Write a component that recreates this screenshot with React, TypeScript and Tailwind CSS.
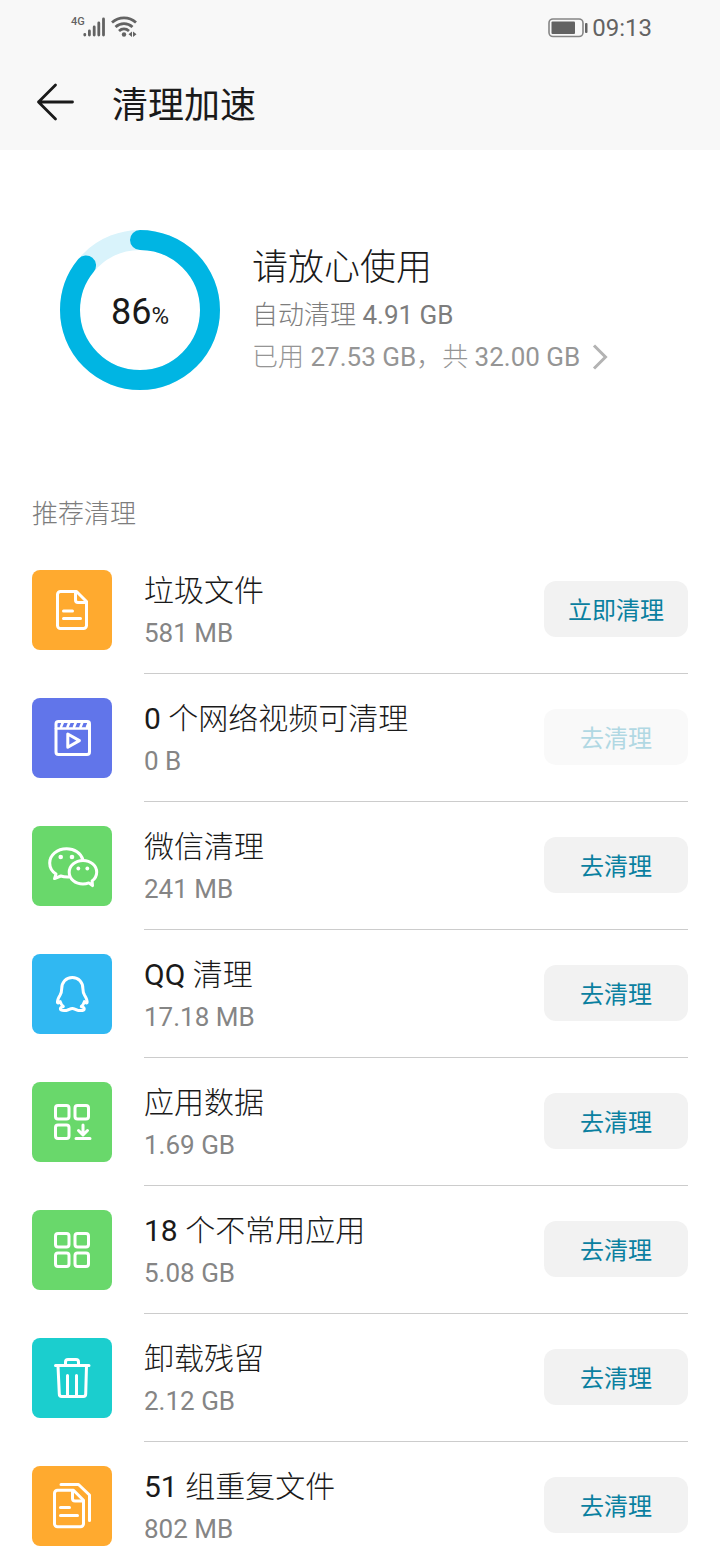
import React from 'react';
import { clsx } from 'clsx';

type CleanItem = {
  title: string;
  size: string;
  action: string;
  tile: string;
  icon: React.ReactNode;
  disabled?: boolean;
};

// Light Chinese glyphs next to regular-weight latin and digits
const Mixed = ({ text }: { text: string }) => (
  <span>
    {text.split(/([\x20-\x7e]+)/).filter(Boolean).map((part, index) => (
      <span key={index} className={/^[\x20-\x7e]/.test(part) ? 'font-normal' : 'font-light'}>
        {part}
      </span>
    ))}
  </span>
);

const Squares = ({ children }: { children?: React.ReactNode }) => (
  <>
    <rect x="23.5" y="23.5" width="13.5" height="13.5" rx="2.5" />
    <rect x="43" y="23.5" width="13.5" height="13.5" rx="2.5" />
    <rect x="23.5" y="43" width="13.5" height="13.5" rx="2.5" />
    {children}
  </>
);

const items: CleanItem[] = [
  {
    title: '垃圾文件',
    size: '581 MB',
    action: '立即清理',
    tile: 'bg-[#ffaa2f]',
    icon: (
      <>
        <path d="M44.5 21.5H28.5a3 3 0 0 0-3 3v31a3 3 0 0 0 3 3h23a3 3 0 0 0 3-3V31.5z" />
        <path d="M43.5 22v8a2.5 2.5 0 0 0 2.5 2.5h8" />
        <path d="M31.5 41h9M31.5 48.5h17" />
      </>
    ),
  },
  {
    title: '0 个网络视频可清理',
    size: '0 B',
    action: '去清理',
    tile: 'bg-[#6175ea]',
    disabled: true,
    icon: (
      <>
        <rect x="24" y="23.5" width="33.5" height="33" rx="2.5" />
        <path d="M24 30.5h33" strokeWidth="2.4" />
        <path d="M29 29l2-5M35.5 29l2-5M42 29l2-5M48.5 29l2-5M55 29l2-5" strokeWidth="2.6" />
        <path d="M35.8 36v13.2l11.6-6.6z" />
      </>
    ),
  },
  {
    title: '微信清理',
    size: '241 MB',
    action: '去清理',
    tile: 'bg-[#69d86b]',
    icon: (
      <>
        <path d="M50.8 33.5C49 27 42.5 22.7 34.6 22.7c-9.4 0-16.9 6.3-16.9 14.2 0 4.6 2.5 8.6 6.3 11.1L22.5 52.6l6.3-2.6c2.3.8 4.8 1.1 8 1" />
        <path d="M51 34.4c-7.7 0-13.8 5.2-13.8 11.8S43.3 58 51 58c2 0 4-.4 5.8-1.1l3.7 2.7-.4-4.7c2.9-2.2 4.6-5.3 4.6-8.7 0-6.6-6-11.8-13.7-11.8z" />
        <g fill="currentColor" stroke="none">
          <circle cx="28.7" cy="31" r="2.3" />
          <circle cx="40" cy="31" r="2.3" />
          <circle cx="46.3" cy="42.5" r="1.9" />
          <circle cx="55.3" cy="42.5" r="1.9" />
        </g>
      </>
    ),
  },
  {
    title: 'QQ 清理',
    size: '17.18 MB',
    action: '去清理',
    tile: 'bg-[#30b8f2]',
    icon: (
      <path d="M40.3 23.5c-6.5 0-10.6 5-10.6 11.2 0 2.5-.4 4.3-1.7 6.6-1.5 2.5-2.9 5-2.5 7.2.2 1 1.3.4 2.7-.9.6 2 1.6 3.7 3.1 4.9-2 .7-3.1 1.500-2.9 2.600.3 1.600 3.200 1.600 5.900 1.300 2.500-.3 3.700-1.900 6-1.900s3.500 1.600 6 1.900c2.700.3 5.600.3 5.900-1.300.2-1.100-.9-1.900-2.900-2.600 1.500-1.200 2.500-2.900 3.100-4.900 1.400 1.300 2.500 1.900 2.700.9.4-2.200-1-4.700-2.500-7.200-1.300-2.300-1.700-4.100-1.700-6.600 0-6.200-4.100-11.200-10.600-11.200z" />
    ),
  },
  {
    title: '应用数据',
    size: '1.69 GB',
    action: '去清理',
    tile: 'bg-[#69d86b]',
    icon: (
      <Squares>
        <path d="M51 43v9.5M46.5 48.5l4.5 4.5 4.5-4.5M44 56.5h14" />
      </Squares>
    ),
  },
  {
    title: '18 个不常用应用',
    size: '5.08 GB',
    action: '去清理',
    tile: 'bg-[#69d86b]',
    icon: (
      <Squares>
        <rect x="43" y="43" width="13.5" height="13.5" rx="2.5" />
      </Squares>
    ),
  },
  {
    title: '卸载残留',
    size: '2.12 GB',
    action: '去清理',
    tile: 'bg-[#1bcece]',
    icon: (
      <>
        <path d="M23.5 27.5h33.5M33.5 27v-3a2.5 2.5 0 0 1 2.5-2.5h8a2.5 2.5 0 0 1 2.5 2.5v3" />
        <path d="M26 28l1.3 28a2.5 2.5 0 0 0 2.5 2.5h21.4a2.5 2.5 0 0 0 2.5-2.5L54.5 28" />
        <path d="M35.5 37.5v20.5M44.5 37.5v20.5" />
      </>
    ),
  },
  {
    title: '51 组重复文件',
    size: '802 MB',
    action: '去清理',
    tile: 'bg-[#ffaa2f]',
    icon: (
      <>
        <path d="M41.5 24.2H25.5a3 3 0 0 0-3 3v30.5a3 3 0 0 0 3 3h23a3 3 0 0 0 3-3V34.2z" />
        <path d="M40.5 24.5v8a2.5 2.5 0 0 0 2.5 2.5h8" />
        <path d="M28.5 41.5h9M28.5 49.5h17" />
        <path d="M29 18.5h17.5L57.5 29v25.5" />
      </>
    ),
  },
];

const StatusBar = () => (
  <div className="flex h-14 items-center justify-between pl-[71px] pr-[68px] text-[#636363]">
    <div className="flex items-center pb-1">
      <span className="w-3 self-start pt-0.5 text-[11px] leading-3 font-medium">4G</span>
      <svg className="h-6 w-6" viewBox="0 0 24 24" fill="none" stroke="currentColor" strokeWidth="2.8" strokeLinecap="round">
        <path d="M1.800 20.500v.5M6.400 17v4M11.200 13v8M15.800 9v12M20.500 5v16" />
      </svg>
      <svg className="ml-1 h-6 w-7" viewBox="0 0 28 24" fill="none" stroke="currentColor" strokeWidth="2.8">
        <path d="M1 8.500c7-6.300 17-6.300 24 0M4.500 13c5-4.500 12-4.500 17 0M8 17c3-2.700 7-2.700 10 0" />
        <g fill="currentColor" stroke="none">
          <circle cx="13" cy="20.5" r="2.2" />
          <path d="M21 17.500v5.500l-3.500-2.750zM22 17.500v5.500l3.500-2.750z" />
        </g>
      </svg>
    </div>
    <div className="flex items-center gap-1">
      <svg className="h-5 w-10" viewBox="0 0 40 20" fill="none">
        <rect x="1" y="1" width="34" height="17.5" rx="4" stroke="#858585" strokeWidth="1.6" />
        <rect x="3.5" y="3.5" width="23.5" height="12.5" rx="1" fill="currentColor" />
        <rect x="37" y="5" width="2.5" height="10" rx="1" fill="currentColor" />
      </svg>
      <time className="text-2xl leading-6">09:13</time>
    </div>
  </div>
);

const Header = () => (
  <header className="shrink-0 bg-[#f8f8f8]">
    <StatusBar />
    <div className="flex h-[94px] items-center gap-9 px-9">
      <button type="button" aria-label="返回" className="text-[#1a1a1a]">
        <svg className="h-10 w-10" viewBox="0 0 40 40" fill="none" stroke="currentColor" strokeWidth="2.8" strokeLinecap="round" strokeLinejoin="round">
          <path d="M19.5 2L2.5 19l17 17M2.5 19h34" />
        </svg>
      </button>
      <h1 className="pt-1.5 text-4xl leading-10 text-[#1a1a1a]">清理加速</h1>
    </div>
  </header>
);

const UsageRing = ({ percent }: { percent: number }) => (
  <div className="grid size-40 shrink-0 place-items-center">
    <svg className="col-start-1 row-start-1 size-40 -rotate-90" viewBox="0 0 160 160" fill="none" strokeWidth="20">
      <circle cx="80" cy="80" r="70" stroke="#d9f3fb" />
      <circle
        cx="80"
        cy="80"
        r="70"
        stroke="#00b5e3"
        strokeLinecap="round"
        pathLength="100"
        strokeDasharray={`${percent} 100`}
      />
    </svg>
    <p className="col-start-1 row-start-1 pt-1 text-4xl text-[#1a1a1a]">
      {percent}
      <span className="text-2xl">%</span>
    </p>
  </div>
);

const Summary = () => (
  <section className="flex items-center gap-8 px-15 pt-20">
    <UsageRing percent={86} />
    <div className="pt-0.5">
      <h2 className="mb-0.5 text-4xl leading-12 text-[#1a1a1a]">
        <Mixed text="请放心使用" />
      </h2>
      <p className="text-[26px] leading-[42px] text-[#7d7d7d]">
        <Mixed text="自动清理 4.91 GB" />
      </p>
      <a href="#storage" className="flex items-center gap-3 text-[26px] leading-[42px] text-[#959595]">
        <Mixed text="已用 27.53 GB，共 32.00 GB" />
        <svg className="h-7 w-4" viewBox="0 0 16 28" fill="none" stroke="#b3b3b3" strokeWidth="3">
          <path d="M2 2.5L13.5 14 2 25.5" />
        </svg>
      </a>
    </div>
  </section>
);

const CleanRow = ({ item, last }: { item: CleanItem; last: boolean }) => (
  <li className="flex h-32 gap-8">
    <div className={clsx('mt-6 size-20 shrink-0 rounded-lg text-white', item.tile)}>
      <svg viewBox="0 0 80 80" fill="none" stroke="currentColor" strokeWidth="3" strokeLinecap="round" strokeLinejoin="round">
        {item.icon}
      </svg>
    </div>
    <div className={clsx('flex flex-1 justify-between', !last && 'border-b border-[#cccccc]')}>
      <div className="pt-[23px]">
        <h3 className="text-3xl leading-11 text-[#1a1a1a]">
          <Mixed text={item.title} />
        </h3>
        <p className="text-[26px] leading-10 text-[#858585]">{item.size}</p>
      </div>
      <button
        type="button"
        disabled={item.disabled}
        className={clsx(
          'mt-[35px] h-14 w-36 rounded-xl pt-1 text-2xl',
          item.disabled ? 'bg-[#f9f9f9] text-[#b1d8e3]' : 'bg-[#f2f2f2] text-[#0a80a0]'
        )}
      >
        {item.action}
      </button>
    </div>
  </li>
);

const App = () => {
  return (
    <div className="flex h-screen flex-col bg-white font-['Roboto','Noto_Sans_CJK_SC',sans-serif]" lang="zh-CN">
      <Header />
      <main className="flex-1 overflow-y-auto [scrollbar-width:none]">
        <Summary />
        <section className="px-8 pt-[104px]">
          <h2 className="pt-0.5 text-[26px] leading-9 text-[#7d7d7d]">
            <Mixed text="推荐清理" />
          </h2>
          <ul className="pt-3.5">
            {items.map((item, index) => (
              <CleanRow key={item.title} item={item} last={index === items.length - 1} />
            ))}
          </ul>
        </section>
      </main>
    </div>
  );
};

export default App;
